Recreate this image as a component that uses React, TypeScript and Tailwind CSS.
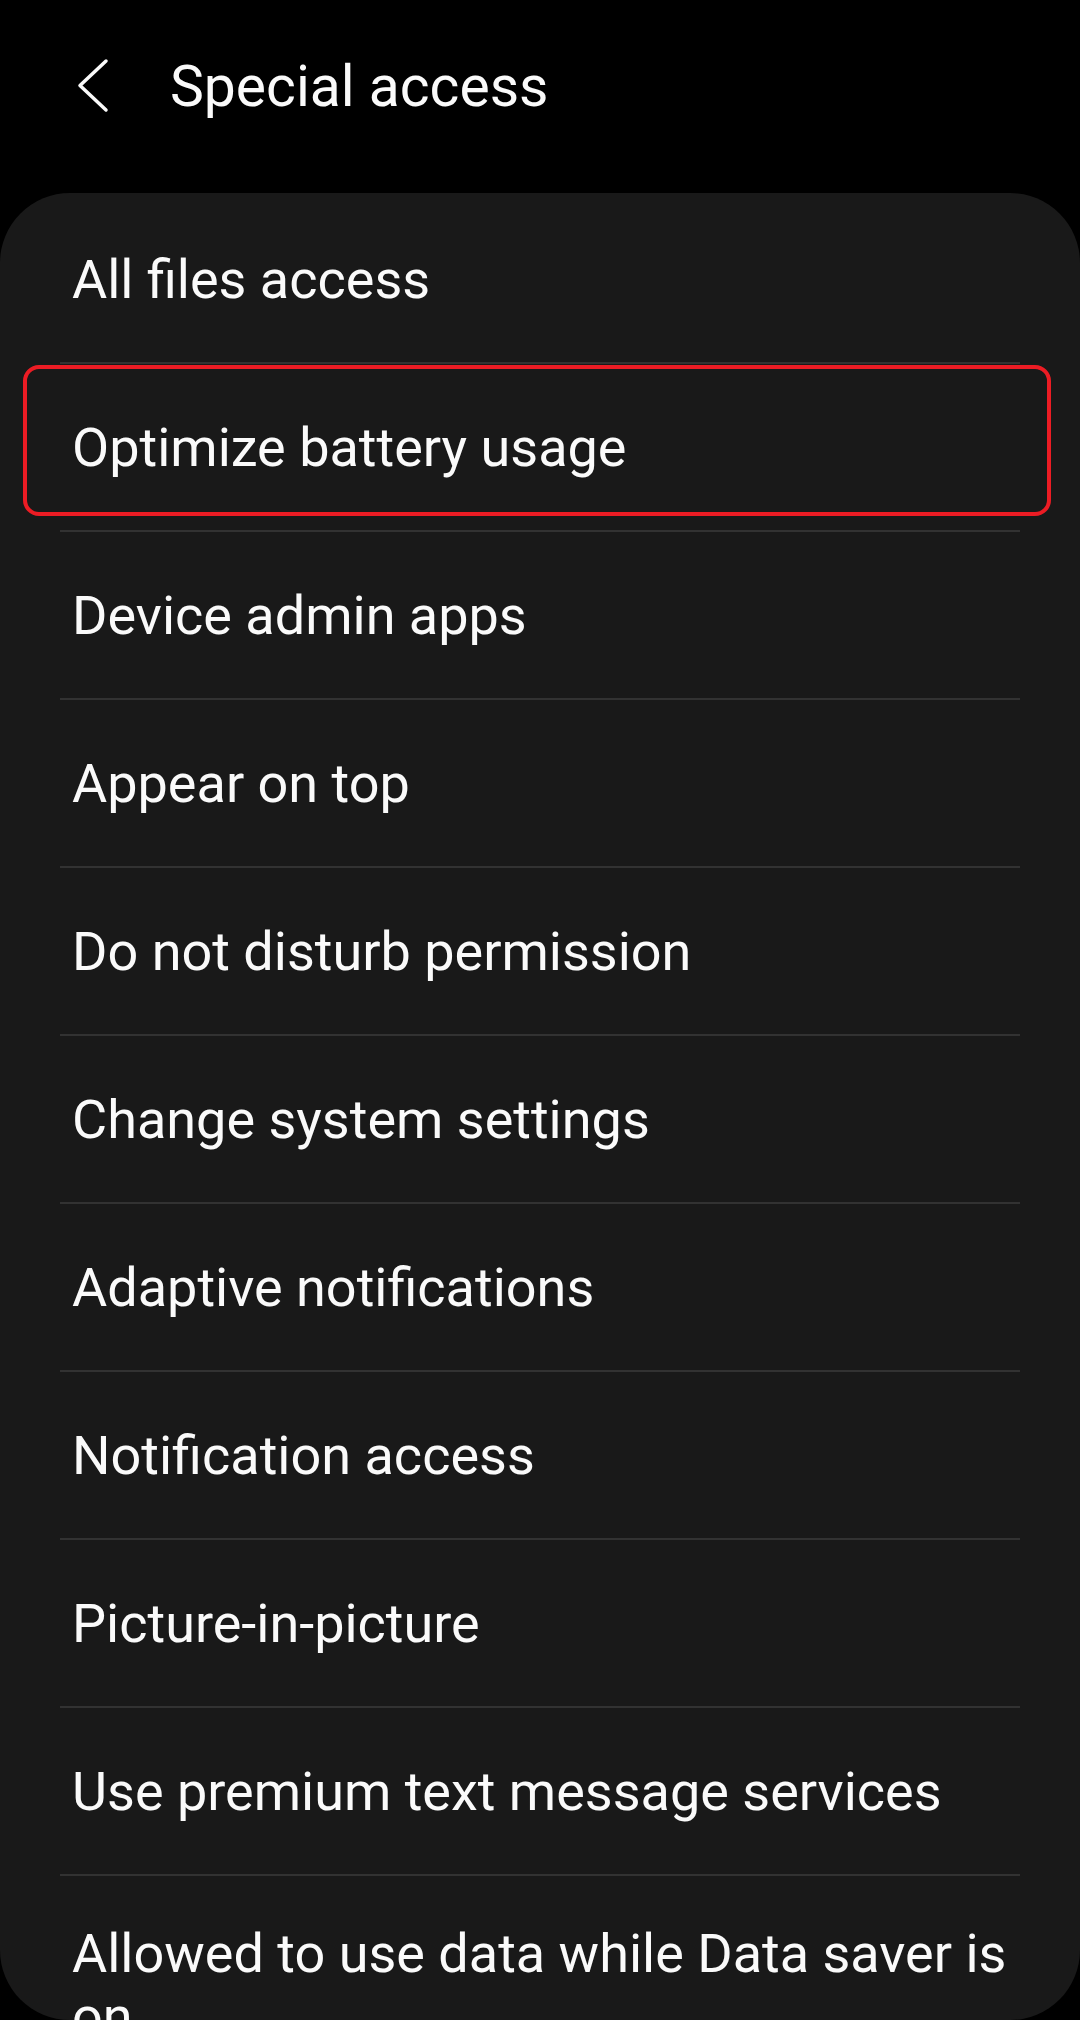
import React from "react";

const items = [
  "All files access",
  "Optimize battery usage",
  "Device admin apps",
  "Appear on top",
  "Do not disturb permission",
  "Change system settings",
  "Adaptive notifications",
  "Notification access",
  "Picture-in-picture",
  "Use premium text message services",
];

export default function App() {
  return (
    <div className="w-[1080px] h-[2020px] bg-black overflow-hidden font-['Roboto',sans-serif] text-[#fafafa]">
      <div className="h-[193px] pb-[21px] flex items-center pl-[77px]">
        <svg width="32" height="56" viewBox="0 0 32 56" fill="none">
          <path d="M29 3 L3 27.5 L29 52" stroke="#fafafa" strokeWidth="3.5" strokeLinecap="round" strokeLinejoin="round" />
        </svg>
        <h1 className="ml-[61px] text-[57px] leading-none font-normal">Special access</h1>
      </div>
      <div className="bg-[#191919] rounded-[70px] h-[1827px] overflow-hidden pt-[3px]">
        {items.map((t, i) => (
          <div key={t}>
            <div className="relative h-[166px] flex items-center pl-[72px]">
              <span className="text-[54px] leading-[63px]">{t}</span>
              {i === 1 && (
                <div className="absolute top-[1px] left-[23px] w-[1028px] h-[151px] border-[4px] border-[#ec1c24] rounded-[16px]" />
              )}
            </div>
            <div className="h-[2px] mx-[60px] bg-[#323232]" />
          </div>
        ))}
        <div className="pt-[46px] pl-[72px] pr-[40px]">
          <span className="text-[54px] leading-[63px]">Allowed to use data while Data saver is on</span>
        </div>
      </div>
    </div>
  );
}
